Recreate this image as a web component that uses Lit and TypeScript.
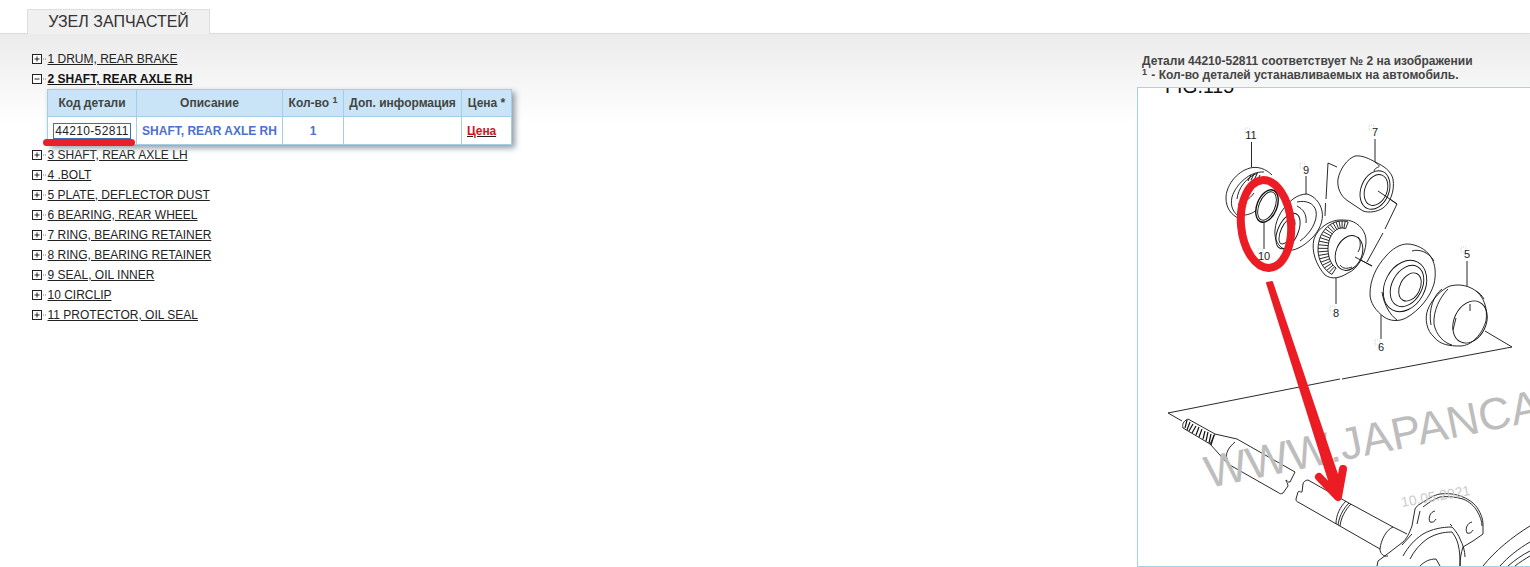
import { LitElement, html, css, svg } from "lit";
import { customElement } from "lit/decorators.js";

const before = ["1 DRUM, REAR BRAKE"];
const after = [
  "3 SHAFT, REAR AXLE LH", "4 .BOLT", "5 PLATE, DEFLECTOR DUST", "6 BEARING, REAR WHEEL",
  "7 RING, BEARING RETAINER", "8 RING, BEARING RETAINER", "9 SEAL, OIL INNER", "10 CIRCLIP", "11 PROTECTOR, OIL SEAL",
];

const toggle = (open: boolean) => html`<svg class="toggle" width="15" height="10" viewBox="0 0 15 10">
  <rect x="0.5" y="0.5" width="9" height="9" fill="#fff" stroke="#222"></rect>
  <path d="M2.5 5H7.5${open ? "" : "M5 2.5V7.5"}" stroke="#222" fill="none"></path>
  <path d="M11 5h1M13 5h1" stroke="#777" fill="none"></path>
</svg>`;

const label = (x: number, y: number, t: string) => svg`
  <rect x=${x - 6} y=${y - 7} width="5" height="5" fill="none" stroke="#b5cfe0" stroke-width="0.8" stroke-dasharray="1 1"></rect>
  <text x=${x} y=${y + 4} class="num">${t}</text>`;

const gearAngles = Array.from({ length: 24 }, (_, i) => ((115 + (i * 170) / 23) * Math.PI) / 180);
const gearPoint = (a: number, rx: number, ry: number) =>
  `${(1342 + Math.cos(a) * rx).toFixed(1)} ${(250 + Math.sin(a) * ry).toFixed(1)}`;
const teeth = gearAngles.map((a) => `M${gearPoint(a, 24, 28)}L${gearPoint(a, 14, 21)}`).join("");
const gearInner = "M" + gearAngles.map((a) => gearPoint(a, 14, 21)).join("L");
const gearOuter = "M" + gearAngles.map((a) => gearPoint(a, 24, 28)).join("L");

const diagram = svg`
  <text x="1165" y="93.5" class="fig">FIG.115</text>
  <g fill="none" stroke="#111" stroke-width="0.9" stroke-linejoin="round">
    <!-- plane and corners -->
    <path d="M1485 332L1512 348L1342 380M1340 380L1168 414L1182 422"></path>
    <path d="M1328 164L1337 168M1328 164L1326 200M1325.500 204L1325 217M1378 192L1397 205L1385 230M1383 234L1367 263M1355 258L1372 267"></path>
    <!-- leader lines -->
    <path d="M1251.500 143V168M1306 177V196M1375 140V163M1264 222V250M1336 279V305M1381 316V340M1467 262V288"></path>

    <!-- 11 seal -->
    <path d="M1272 176C1266 170 1258 167 1250 169C1236 173 1226 187 1226 199C1226 209 1231 216 1240 220" fill="#fff"></path>
    <path d="M1264 173C1250 172 1236 185 1232 198C1230 207 1233 214 1240 218M1258 174C1246 178 1238 190 1237 200"></path>
    <path d="M1251 176L1248 182M1254 175L1251 181M1257 175L1254 181M1260 176L1257 182" stroke-width="1"></path>
    <path d="M1238 205C1242 205 1250 200 1254 194M1240 216C1246 217 1254 214 1256 211"></path>

    <!-- 9 seal -->
    <path d="M1307 195C1314 197 1320 203 1322 212C1324 222 1319 232 1312 239C1304 247 1294 253 1286 251C1278 248 1274 240 1275 231C1276 219 1283 208 1293 200C1297 197 1302 195 1307 195Z" fill="#fff"></path>
    <path d="M1297 203C1306 201 1314 204 1316 212C1318 222 1310 235 1300 242"></path>
    <ellipse cx="1288" cy="232" rx="10" ry="19" transform="rotate(25 1288 232)"></ellipse>
    <ellipse cx="1287" cy="232" rx="6" ry="14" transform="rotate(25 1287 232)"></ellipse>
    <path d="M1297 207C1303 210 1307 215 1306 224"></path>

    <!-- 10 ring -->
    <g transform="rotate(22 1267 207)">
      <ellipse cx="1267" cy="207" rx="10" ry="17" stroke-width="1.4" fill="#fff"></ellipse>
      <ellipse cx="1267" cy="207" rx="8" ry="15"></ellipse>
    </g>

    <!-- 7 cylinder -->
    <path d="M1355 157C1362 156 1370 160 1375 163C1384 167 1391 172 1393 180C1395 192 1390 204 1383 209C1377 213 1369 214 1363 212L1348 202C1340 197 1337 188 1338 180C1340 170 1347 160 1355 157Z" fill="#fff"></path>
    <path d="M1375 163C1384 170 1376 166 1374 172"></path>
    <ellipse cx="1375" cy="191" rx="14" ry="20" transform="rotate(22 1375 191)"></ellipse>
    <ellipse cx="1376" cy="191" rx="11" ry="16" transform="rotate(22 1376 191)"></ellipse>
    <path d="M1378 192L1397 205"></path>

    <!-- 8 gear bearing -->
    <path d="M1340 221C1331 221 1318 228 1314 240C1311 252 1316 266 1325 276C1332 281 1340 279 1348 274C1358 270 1365 256 1366 244C1367 232 1358 224 1351 222C1348 221 1344 221 1340 221Z" fill="#fff"></path>
    <path d="${teeth}"></path>
    <path d="${gearInner}"></path>
    <path d="${gearOuter}"></path>
    <ellipse cx="1349" cy="254" rx="13" ry="18" transform="rotate(22 1349 254)"></ellipse>
    <path d="M1358 238C1361 242 1361 248 1358 253M1340 266C1343 270 1347 270 1352 268"></path>
    <path d="M1355 258L1372 267"></path>

    <!-- 6 bearing -->
    <path d="M1407 245C1416 245 1426 250 1431 258C1436 266 1436 276 1434 285C1430 298 1420 311 1406 319C1398 323 1390 322 1384 318C1376 312 1370 304 1370 295C1370 281 1376 268 1386 257C1392 250 1400 245 1407 245Z" fill="#fff"></path>
    <path d="M1382 293C1384 306 1390 316 1397 321M1412 252C1418 250 1428 252 1434 262"></path>
    <ellipse cx="1405" cy="287" rx="20" ry="27" transform="rotate(28 1405 287)"></ellipse>
    <ellipse cx="1407" cy="287" rx="15" ry="22" transform="rotate(28 1407 287)"></ellipse>
    <ellipse cx="1410" cy="288" rx="10" ry="15" transform="rotate(28 1410 288)"></ellipse>

    <!-- 5 dome -->
    <path d="M1450 287C1442 290 1432 300 1428 310C1424 320 1427 332 1434 338C1440 346 1450 347 1460 347C1472 347 1482 335 1486 322C1488 310 1484 296 1473 290C1466 286 1458 285 1450 287Z" fill="#fff"></path>
    <path d="M1442 290C1434 296 1428 310 1431 326M1448 290C1440 298 1433 312 1434 325C1436 336 1444 344 1452 346"></path>
    <ellipse cx="1470" cy="323" rx="16" ry="22" transform="rotate(25 1470 323)"></ellipse>
    <path d="M1456 319L1453 331M1470 305V312M1476 292C1480 294 1482 297 1484 300"></path>

    <!-- left half shaft -->
    <path d="M1188 420L1215 435L1237 440L1295 473L1290 483C1288 484 1287 481 1286 481C1286 483 1288 484 1288 487L1283 494C1281 495 1280 495 1279 494L1228 465L1210 445L1183 429C1182 426 1183 422 1188 420Z" fill="#fff"></path>
    <path d="M1187 421L1185 429M1190 423L1187 431M1193 425L1189 432M1196 427L1192 434M1199 428L1196 436M1202 430L1199 438M1205 432L1203 440M1208 433L1206 442M1211 435L1209 444M1214 436L1211 446" stroke-width="1.2"></path>
    <path d="M1215 435L1210 445M1235 443C1229 448 1225 454 1227 460"></path>

    <!-- right half shaft -->
    <path d="M1308 481L1347 503L1393 528L1407 535M1308 481C1306 481 1303 483 1303 485L1302 493C1301 494 1299 491 1298 493L1296 500C1296 502 1297 503 1298 503L1380 550"></path>
    <path d="M1346 502C1340 508 1336 516 1336 525M1349 504C1343 510 1339 518 1338 526M1351 505C1345 511 1341 519 1340 527"></path>
    <path d="M1393 528C1386 531 1381 541 1380 550C1380 555 1384 558 1388 557"></path>

    <!-- flange -->
    <path d="M1415 510C1417 507 1418 506 1420 505C1428 500 1434 496 1440 495C1448 494 1456 495 1463 498C1470 501 1475 505 1478 510C1481 515 1483 520 1483 525L1483 535L1473 542L1463 548C1461 554 1460 560 1460 567"></path>
    <path d="M1415 510L1412 527C1409 535 1407 539 1403 543L1390 553L1378 562L1377 567"></path>
    <path d="M1423 508C1428 504 1434 500 1440 498C1448 497 1456 498 1463 500C1470 503 1474 507 1477 512C1480 517 1482 522 1482 527M1420 512L1417 525M1412 535L1402 546"></path>
    <path d="M1435 512C1430 513 1428 519 1430 523C1433 524 1435 522 1436 520"></path>
    <path d="M1472 523C1467 524 1465 530 1467 534C1470 535 1472 533 1473 531"></path>
    <path d="M1403 557C1408 548 1414 541 1423 535C1432 530 1442 528 1452 528C1456 532 1459 537 1460 540C1463 546 1465 552 1465 558"></path>
    <path d="M1410 560C1414 552 1420 545 1427 540C1435 535 1443 533 1452 533C1455 537 1457 541 1458 545C1460 552 1460 560 1460 567"></path>
    <path d="M1420 567C1425 562 1430 560 1436 560L1440 567M1452 527L1450 525"></path>
    <!-- brake disc -->
    <path d="M1483 567C1495 552 1512 538 1530 527M1500 567C1508 558 1518 550 1530 543M1508 567C1515 561 1522 556 1530 552M1515 567C1520 563 1525 560 1530 557"></path>
  </g>
  ${label(1251, 136, "11")}
  ${label(1306, 171, "9")}
  ${label(1375, 133, "7")}
  ${label(1264, 257, "10")}
  ${label(1467, 255, "5")}
  ${label(1336, 314, "8")}
  ${label(1381, 348, "6")}
  <text x="1208" y="489" class="wm" transform="rotate(-11.5 1208 489)">WWW.JAPANCA</text>
  <text x="1402" y="508" class="date" transform="rotate(-10 1402 508)">10.05.2021</text>
  <g stroke="#ec1c24" stroke-linecap="round" stroke-linejoin="round">
    <ellipse cx="1266" cy="225" rx="25" ry="44" stroke-width="8" fill="none" transform="rotate(-5 1266 225)"></ellipse>
    <polygon points="1267,284 1272,283 1342,490 1333,494" stroke-width="2" fill="#ec1c24"></polygon>
    <path d="M1319 478L1338 498L1343 470" stroke-width="8" fill="none"></path>
    <polygon points="1327,484 1338,497 1340,478" stroke-width="4" fill="#ec1c24"></polygon>
  </g>
`;

@customElement("app-root")
export class AppRoot extends LitElement {
  static styles = css`
    :host { display: block; height: 567px; overflow: hidden; background: #fff; font-family: "Liberation Sans", Arial, sans-serif; }
    .tabs { display: flex; height: 34px; box-sizing: border-box; padding: 9px 0 0 27px; border-bottom: 1px solid #dcdcdc; }
    .tab { width: 183px; height: 25px; box-sizing: border-box; background: #f0f0f0; border: 1px solid #dedede; border-bottom: 0; font-size: 16px; line-height: 24px; color: #333; text-align: center; }
    .main { display: flex; justify-content: space-between; height: 533px; background: linear-gradient(#ebebeb, #fff 90px); }
    .tree { padding: 15px 0 0 32px; display: flex; flex-direction: column; width: 600px; box-sizing: border-box; }
    .row { display: flex; align-items: center; height: 20px; font-size: 12px; color: #222; }
    .row span { text-decoration: underline; padding-left: 0.5px; }
    .toggle { flex: none; }
    .row.open { font-weight: bold; color: #111; }
    .panel { position: relative; margin: 0 0 0 15px; height: 56px; }
    table { border-collapse: collapse; background: #fff; font-size: 12px; box-shadow: 3px 3px 6px #8c9aa3; table-layout: fixed; width: 464px; }
    th, td { border: 1px solid #a3cfe6; padding: 0; text-align: center; font-weight: bold; }
    th { background: #c8e4f6; color: #444; height: 26px; }
    sup { font-size: 9px; line-height: 0; vertical-align: 4px; }
    td { color: #4d6fd0; height: 27px; }
    td.code { font-weight: normal; color: #222; }
    td.cost { text-align: left; padding-left: 5px; }
    .codebox { display: block; width: 76px; height: 14px; line-height: 14px; margin: 0 auto 0 5px; border: 1px solid #3f6fb0; letter-spacing: 0.35px; }
    .price { color: #d80f1b; text-decoration: underline; text-decoration-color: #222; letter-spacing: -0.1px; }
    .mark { position: absolute; left: -4px; top: 50px; width: 92px; height: 7px; background: #e8202a; border-radius: 3.5px; }
    .side { width: 393px; display: flex; flex-direction: column; flex: none; }
    .note { height: 34px; padding: 20px 0 0 5px; font-size: 12px; font-weight: bold; line-height: 14px; color: #444; }
    .note sup { margin-right: 1px; }
    .pic { border: 1px solid #a3d3e6; border-right: 0; background: #fff; height: 478px; flex: none; }
    .pic svg { display: block; }
    .num { font: 11px "Liberation Sans", Arial, sans-serif; fill: #222; text-anchor: middle; }
    .fig { font: 19.5px "Liberation Sans", Arial, sans-serif; fill: #111; }
    .wm { font: 45px "Liberation Sans", Arial, sans-serif; fill: #bdbdbd; }
    .date { font: 14px "Liberation Sans", Arial, sans-serif; fill: #ccc; }
  `;

  render() {
    return html`
      <div class="tabs"><div class="tab">УЗЕЛ ЗАПЧАСТЕЙ</div></div>
      <div class="main">
        <div class="tree">
          ${before.map((t) => html`<div class="row">${toggle(false)}<span>${t}</span></div>`)}
          <div class="row open">${toggle(true)}<span>2 SHAFT, REAR AXLE RH</span></div>
          <div class="panel">
            <table>
              <colgroup><col style="width:89px" /><col style="width:146px" /><col style="width:61px" /><col style="width:118px" /><col style="width:50px" /></colgroup>
              <tr><th>Код детали</th><th>Описание</th><th>Кол-во <sup>1</sup></th><th>Доп. информация</th><th>Цена *</th></tr>
              <tr>
                <td class="code"><span class="codebox">44210-52811</span></td>
                <td>SHAFT, REAR AXLE RH</td>
                <td>1</td>
                <td></td>
                <td class="cost"><span class="price">Цена</span></td>
              </tr>
            </table>
            <div class="mark"></div>
          </div>
          ${after.map((t) => html`<div class="row">${toggle(false)}<span>${t}</span></div>`)}
        </div>
        <div class="side">
          <div class="note">Детали 44210-52811 соответствует № 2 на изображении<br /><sup>1</sup> - Кол-во деталей устанавливаемых на автомобиль.</div>
          <div class="pic">
            <svg width="392" height="478" viewBox="1138 89 392 478">${diagram}</svg>
          </div>
        </div>
      </div>
    `;
  }
}
